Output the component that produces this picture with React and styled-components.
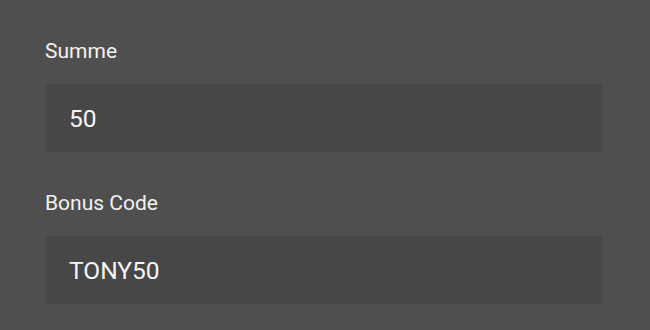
import React, { useState } from 'react';
import styled, { createGlobalStyle } from 'styled-components';

const GlobalStyle = createGlobalStyle`
  html, body {
    margin: 0;
    padding: 0;
    background-color: #4f4f4f;
  }
  body {
    font-family: Roboto, "Liberation Sans", Arial, sans-serif;
  }
`;

const Page = styled.div`
  width: 650px;
  height: 330px;
  box-sizing: border-box;
  padding: 39px 47px 0 46px;
  background-color: #4f4f4f;
  overflow: hidden;
`;

const Field = styled.div`
  display: flex;
  flex-direction: column;
  margin-bottom: 39px;
`;

const Label = styled.label`
  font-size: 21px;
  line-height: 24px;
  color: #f2f2f2;
  margin-bottom: 21px;
  margin-left: -1px;
`;

const Input = styled.input`
  box-sizing: border-box;
  width: 100%;
  height: 68px;
  padding: 0 23px;
  border: none;
  border-radius: 3px;
  background-color: #474747;
  color: #f5f5f5;
  font-family: inherit;
  font-size: 24.5px;
  outline: none;
`;

const App = () => {
    const [sum, setSum] = useState('50');
    const [code, setCode] = useState('TONY50');

    return (
        <>
            <GlobalStyle />
            <Page>
                <Field>
                    <Label htmlFor="summe">Summe</Label>
                    <Input id="summe" value={sum} onChange={(e) => setSum(e.target.value)} />
                </Field>
                <Field>
                    <Label htmlFor="bonus">Bonus Code</Label>
                    <Input id="bonus" value={code} onChange={(e) => setCode(e.target.value)} />
                </Field>
            </Page>
        </>
    );
};

export default App;
